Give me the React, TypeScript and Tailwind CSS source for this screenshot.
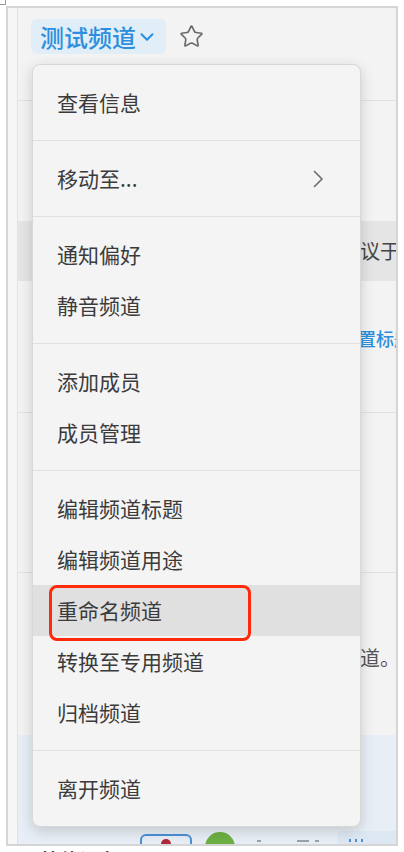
import { Star, ChevronDown } from "lucide-react";

const cjk = { fontFamily: '"Noto Sans CJK SC", "Noto Sans", sans-serif' };

type Item = { label: string; sub?: boolean; active?: boolean };

const sections: Item[][] = [
    [{ label: "查看信息" }],
    [{ label: "移动至...", sub: true }],
    [{ label: "通知偏好" }, { label: "静音频道" }],
    [{ label: "添加成员" }, { label: "成员管理" }],
    [
        { label: "编辑频道标题" },
        { label: "编辑频道用途" },
        { label: "重命名频道", active: true },
        { label: "转换至专用频道" },
        { label: "归档频道" },
    ],
    [{ label: "离开频道" }],
];

const MenuRow = ({ item }: { item: Item }) => (
    <div
        className={`h-[51px] flex items-center justify-between pl-[24px] pr-[36px] text-[21px] text-[#3b3b3b] ${item.active ? "bg-[#e0e0e0]" : ""}`}
    >
        <span className="whitespace-nowrap">{item.label}</span>
        {item.sub && (
            <svg width="11" height="18" viewBox="0 0 11 18" fill="none">
                <polyline points="1.5,1.5 9,9 1.5,16.5" stroke="#6f6f6f" strokeWidth="1.7" strokeLinecap="round" strokeLinejoin="round" />
            </svg>
        )}
    </div>
);

const ChannelMenu = () => (
    <div className="absolute left-[32px] top-[64px] w-[329px] rounded-[8px] border border-[#d8d8d8] bg-[#f4f4f4] shadow-[0_4px_14px_rgba(0,0,0,0.16)] overflow-hidden">
        {sections.map((group, i) => (
            <div key={i} className={`py-[12px] ${i > 0 ? "border-t border-[#e0e0e0]" : ""}`}>
                {group.map((item) => (
                    <MenuRow key={item.label} item={item} />
                ))}
            </div>
        ))}
    </div>
);

export default function App() {
    return (
        <div className="relative w-[404px] h-[852px] bg-white overflow-hidden" style={cjk}>
            {/* corner crop mark */}
            <div className="absolute left-0 top-0 w-[6px] h-[5px] border-r border-b border-[#9a9a9a]" />

            {/* screenshot frame */}
            <div className="ml-[6px] mt-[6px] w-[392px] h-[840px] border-2 border-[#d5d5d5] flex overflow-hidden">
                <div className="w-[10px] shrink-0 bg-[#f6f6f6] border-r border-[#e2e2e2]" />
                <div className="flex-1 flex flex-col bg-[#f3f3f3]">
                    <div className="h-[93px] shrink-0 border-b border-[#e1e1e1] pt-[11px] pl-[13px] flex items-start gap-[13px]">
                        <div className="h-[35px] pl-[9px] pr-[8px] rounded-[6px] bg-[#e1edf7] flex items-center text-[24px] font-medium text-[#2b8fdd]">
                            <span className="whitespace-nowrap">测试频道</span>
                            <ChevronDown className="w-[22px] h-[22px]" strokeWidth={2.2} />
                        </div>
                        <Star className="w-[25px] h-[25px] mt-[5px] text-[#6a6a6a]" strokeWidth={1.6} />
                    </div>
                    <div className="h-[120px] shrink-0" />
                    <div className="h-[60px] shrink-0 bg-[#e5e5e5] flex items-center pl-[322px] text-[20px] text-[#444] whitespace-nowrap">
                        建议于本周
                    </div>
                    <div className="h-[132px] shrink-0 border-b border-[#e1e1e1] pt-[44px] pl-[322px] text-[18px] font-medium text-[#2b8fdd] whitespace-nowrap">
                        设置标题
                    </div>
                    <div className="h-[160px] shrink-0 border-b border-[#e1e1e1]" />
                    <div className="h-[162px] shrink-0 pt-[70px] pl-[322px] text-[20px] text-[#555] whitespace-nowrap">
                        频道。
                    </div>
                    <div className="flex-1 bg-[#e7eef5] pt-[99px] flex items-start">
                        <div className="ml-[122px] w-[52px] h-[30px] rounded-[6px] border-2 border-[#4b91d6] flex justify-center pt-[3px]">
                            <div className="w-[10px] h-[6px] rounded-t-full bg-[#b0283a]" />
                        </div>
                        <div className="ml-[13px] -mt-[2px] w-[30px] h-[30px] rounded-full bg-[#6cb043]" />
                        <div className="ml-[22px] mt-[6px] w-[4px] h-[2px] bg-[#9aa3ad]" />
                        <div className="ml-[36px] mt-[6px] w-[12px] h-[2px] bg-[#9aa3ad]" />
                        <div className="ml-[6px] mt-[6px] w-[4px] h-[2px] bg-[#9aa3ad]" />
                        <div className="ml-[18px] -mt-[3px] flex-1 h-[30px] rounded-tl-[6px] bg-[#dde8f3] flex gap-[4px] pl-[12px] pt-[8px]">
                            <div className="w-[2px] h-[3px] bg-[#4b91d6]" />
                            <div className="w-[2px] h-[3px] bg-[#4b91d6]" />
                            <div className="w-[2px] h-[3px] bg-[#4b91d6]" />
                        </div>
                    </div>
                </div>
            </div>

            {/* text below frame, mostly cut off */}
            <div className="h-[6px] overflow-hidden pl-[40px]">
                <div className="text-[18px] font-bold text-black leading-[24px] mt-[1px] whitespace-nowrap tracking-[2px]">
                    其他设备
                </div>
            </div>

            <ChannelMenu />

            {/* red highlight outline */}
            <div className="absolute left-[49px] top-[585px] w-[202px] h-[56px] rounded-[8px] border-[3px] border-[#ff2a0a]" />
        </div>
    );
}
